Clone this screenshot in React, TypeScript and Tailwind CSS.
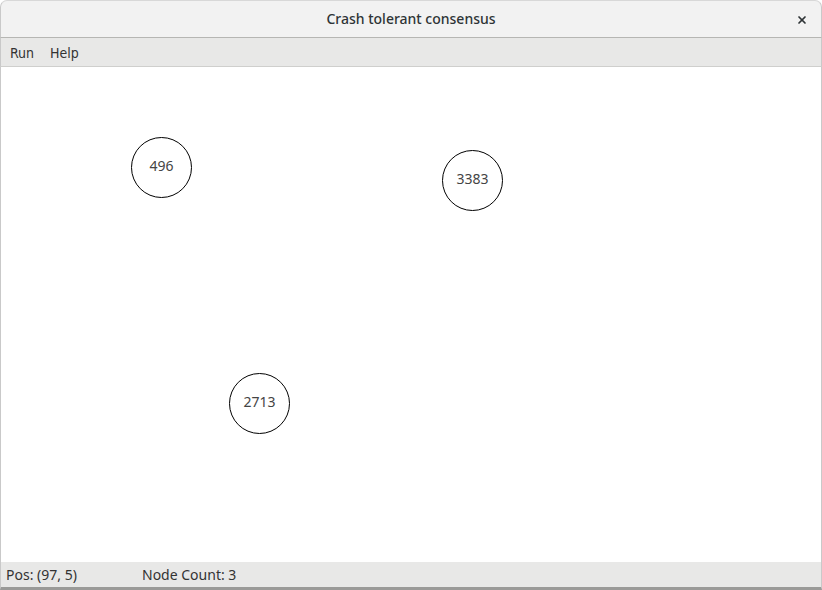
import { X } from 'lucide-react';

// nodes sit on a free canvas, their place is the content
const nodes = [
  { id: 496, x: 160, y: 100 },
  { id: 3383, x: 471, y: 113 },
  { id: 2713, x: 258, y: 336 },
];

export default function App() {
  return (
    <div className="w-[822px] h-[590px] flex flex-col bg-white overflow-hidden" style={{ fontFamily: '"Noto Sans", "DejaVu Sans", sans-serif' }}>
      {/* Title bar */}
      <div className="h-[38px] shrink-0 relative flex items-center justify-center bg-[#f2f2f2] border border-b-[#b6b6b3] border-x-[#c9c9c9] border-t-[#d8d8d8] rounded-t-[7px]">
        <span className="text-[14px] font-medium text-[#2e3436] pb-[1px]">
          Crash tolerant consensus
        </span>
        <X className="absolute right-[13px] top-[13px] w-[12px] h-[12px] text-[#2e3436]" strokeWidth={3.4} />
      </div>

      {/* Menu bar */}
      <div className="h-[29px] shrink-0 flex items-center gap-[16px] px-[9px] pt-[2px] bg-[#e8e8e7] border-b border-[#cfcfcd] border-x border-x-[#c9c9c9] text-[14px] text-[#333]" style={{ fontFamily: '"DejaVu Sans Condensed", "DejaVu Sans", sans-serif' }}>
        <span>Run</span>
        <span>Help</span>
      </div>

      {/* Canvas */}
      <div className="flex-1 relative bg-white border-x border-[#c9c9c9]">
        {nodes.map(n => (
          <div
            key={n.id}
            className="absolute w-[61px] h-[61px] rounded-full border border-black flex items-center justify-center pb-[4px] text-[14px] text-[#444]"
            style={{ left: n.x - 30, top: n.y - 30 }}
          >
            {n.id}
          </div>
        ))}
      </div>

      {/* Status bar */}
      <div className="h-[28px] shrink-0 flex items-center px-[5px] bg-[#e8e8e7] border-x border-[#c9c9c9] border-b-[3px] border-b-[#9a9a98] text-[14px] text-[#333]">
        <span className="w-[136px]">Pos: (97, 5)</span>
        <span>Node Count: 3</span>
      </div>
    </div>
  );
}
